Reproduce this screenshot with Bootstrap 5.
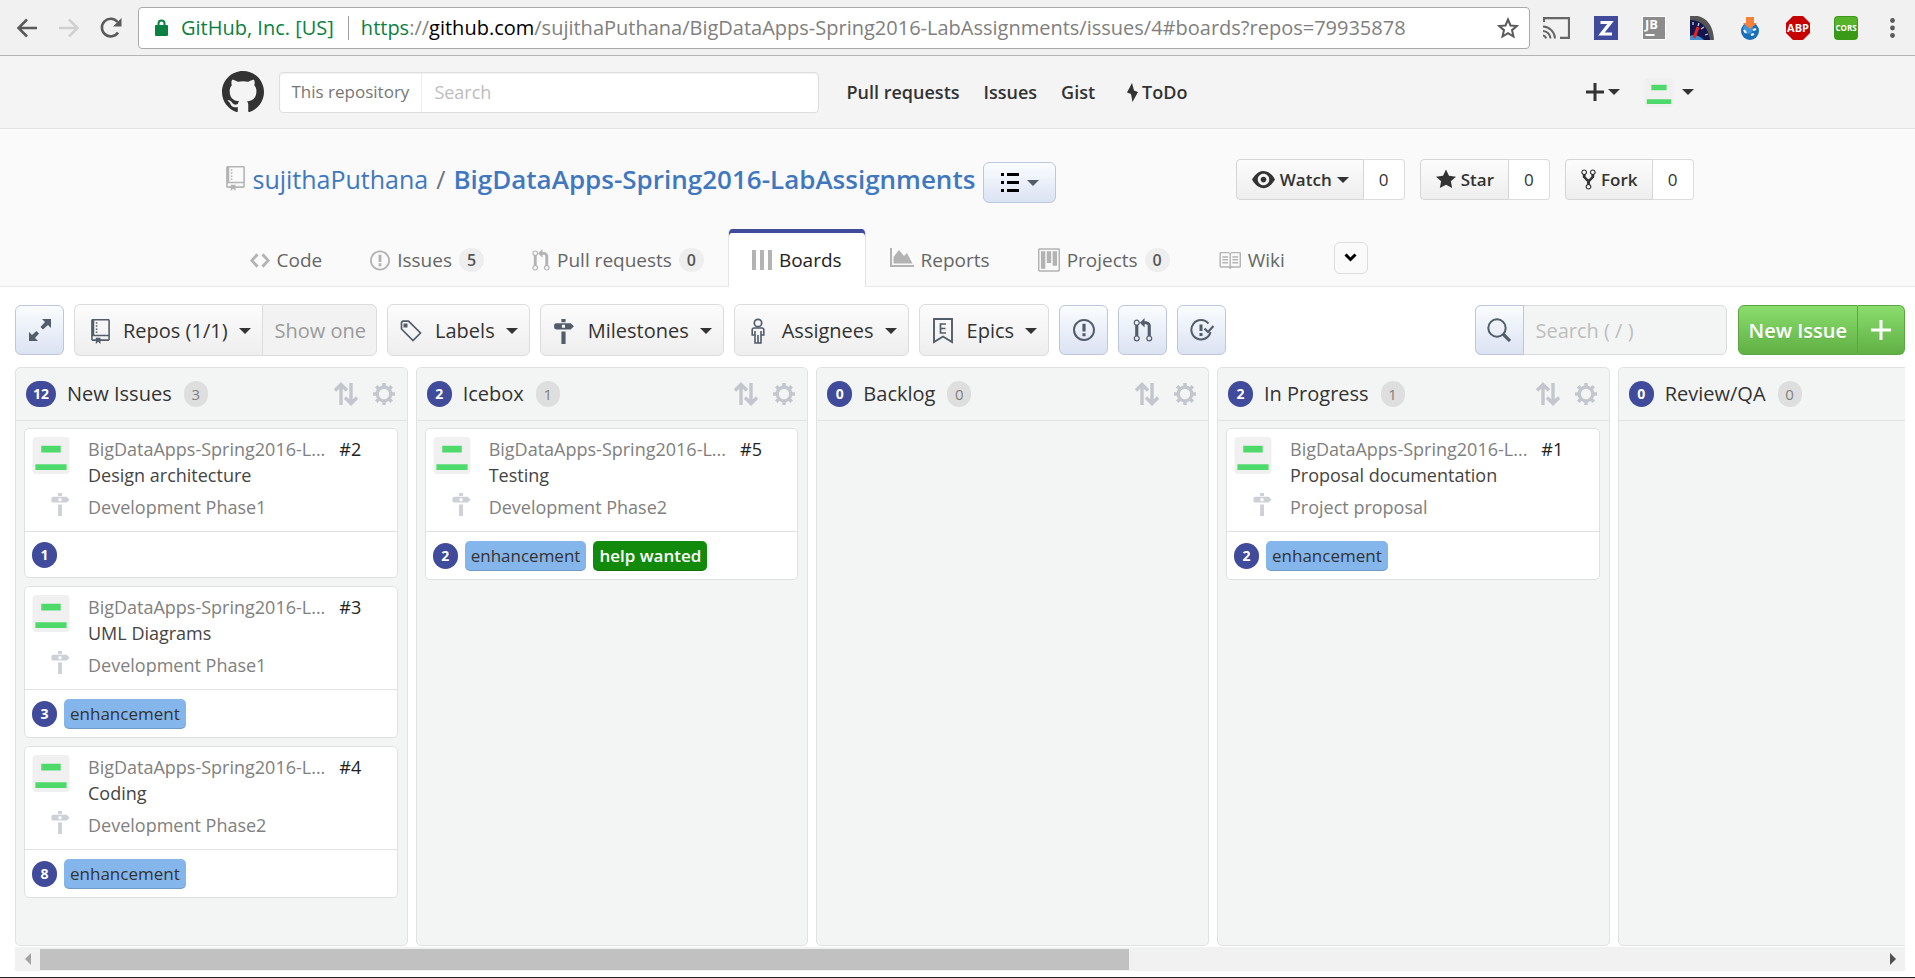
<!DOCTYPE html>
<html lang="en">
<head>
<meta charset="utf-8">
<meta name="viewport" content="width=device-width, initial-scale=1">
<title>Boards · sujithaPuthana/BigDataApps-Spring2016-LabAssignments</title>
<link href="https://cdn.jsdelivr.net/npm/bootstrap@5.3.0/dist/css/bootstrap.min.css" rel="stylesheet">
<style>
  :root { --ink:#333; --zen:#404b9b; --line:#e0e2e2; --slate:#525c6b; }
  body { font-family:"Open Sans","Noto Sans",sans-serif; font-size:18px; line-height:26px; color:var(--ink); background:#fff; overflow:hidden; }
  svg { display:block; flex:none; fill:currentColor; }
  a { text-decoration:none; color:inherit; }
  .caret { width:0; height:0; border:6px solid transparent; border-top-color:currentColor; border-bottom:0; flex:none; }

  /* browser bar */
  .chrome { background:#f1f1f1; border-bottom:1px solid #b4b4b4; height:56px; padding:6px 12px 6px 16px; color:#5a5a5a; }
  .chrome-btn { border:0; background:none; padding:0; color:inherit; }
  .omnibox { background:#fff; border:1px solid #a8a8a8; border-radius:4px; height:42px; margin-left:16px; margin-right:13px; padding:0 10px 0 16px; font-size:20px; }
  .omnibox .site { color:#0b8043; padding-left:5px; padding-right:14px; border-right:1px solid #a0a0a0; margin-right:12px; line-height:24px; }
  .omnibox .rest { color:#808080; }
  .omnibox .scheme { color:#0b8043; }
  .ext { gap:24px; }

  /* site header */
  .inner { width:77%; max-width:1472px; }
  .site-head { background:#f4f4f4; border-bottom:1px solid #e4e4e4; height:73px; }
  .site-search { border:1px solid #ddd; border-radius:4px; background:#fff; height:41px; width:540px; margin-left:15px; box-shadow:inset 0 1px 2px rgba(0,0,0,.06); }
  .site-search label { border-right:1px solid #eee; padding:0 12px 0 12px; font-size:17px; color:#767676; line-height:38px; }
  .site-search input, .tool-search input { border:0; background:none; outline:0; min-width:0; }
  input::placeholder { color:#bdbdbd; opacity:1; }
  .main-nav { margin-left:28px; gap:24px; font-size:18px; font-weight:600; }

  /* repository head */
  .repo-head { background:#fafafa; border-bottom:1px solid #e9e9e9; }
  .repo-title { font-size:25px; line-height:40px; color:#4078c0; padding-top:1px; padding-bottom:26px; }
  .repo-title .repo-name { font-size:26px; font-weight:600; }
  .btn-flat { border:1px solid #d5d5d5; background:linear-gradient(#fcfcfc,#eee); color:var(--ink); font-weight:500; border-radius:4px; }
  .btn-cool { border:1px solid #bcc6dc; background:linear-gradient(#fafdff,#dbe2f2); color:var(--slate); border-radius:6px; padding:0; }
  .list-btn { width:73px; height:41px; }
  .social { gap:15px; padding-top:6px; }
  .social .btn-flat, .social .tally { height:41px; font-size:17px; line-height:24px; }
  .social .btn-flat { border-radius:4px 0 0 4px; padding:0 14px 0 15px; gap:5px; font-weight:600; }
  .social .tally { border:1px solid #dcdcdc; border-left:0; border-radius:0 4px 4px 0; background:#fff; width:41px; font-weight:500; }
  .repo-tabs { height:57px; font-size:19px; color:#666; }
  .repo-tabs .tab { height:58px; padding:4px 23px 0; gap:7px; border:1px solid transparent; border-width:0 1px; }
  .repo-tabs .tab svg { color:#b3b3b3; }
  .repo-tabs .tab.current { background:#fff; color:#222; border-color:#e4e4e4; box-shadow:inset 0 4px 0 var(--zen); border-radius:4px 4px 0 0; }
  .pill { background:#eee; border-radius:12px; width:25px; height:24px; font-size:16px; line-height:24px; font-weight:600; text-align:center; color:#555; }
  .more-btn { width:34px; height:32px; border:1px solid #ddd; border-radius:6px; background:#fafafa; color:#000; margin-left:25px; }

  /* toolbar */
  .tools { padding:17px 10px 11px 15px; gap:10px; }
  .tools .btn-flat { height:52px; font-size:20px; border-radius:6px; padding:2px 11px 0 12px; border-color:#dcdcdc; gap:11px; }
  .tools .btn-flat svg { color:var(--slate); margin-right:2px; }
  .tools .show-one { background:#f2f2f2; color:#9b9b9b; padding-right:10px; }
  .tools .btn-cool { width:49px; height:50px; }
  .tool-search { width:252px; height:50px; border:1px solid #d8dcdc; border-radius:6px; background:#f3f5f5; font-size:20px; margin-right:1px; }
  .tool-search input { padding-top:3px; }
  .tool-search .btn-cool { height:50px; margin:-1px 0 -1px -1px; border-radius:6px 0 0 6px; }
  .btn-make { height:50px; border:1px solid #5aa544; background:linear-gradient(#8add6d,#60b044); color:#fff; font-size:20px; font-weight:600; padding:2px 10px 0; text-shadow:0 1px 0 rgba(0,0,0,.1); }
  .btn-make.add { padding:0 13px; }

  /* board */
  .board { margin:0 10px 0 15px; overflow:hidden; }
  .lane-wrap { flex:0 0 21.2%; padding-right:8px; }
  .lane { background:#f3f5f5; border:1px solid var(--line); border-radius:5px; }
  .lane-head { height:53px; border-bottom:1px solid var(--line); padding:0 12px 0 10px; color:#c3c7cd; }
  .lane-head h2 { font-size:20px; line-height:26px; font-weight:500; color:var(--ink); margin:0 12px 0 11px; }
  .points { background:var(--zen); color:#fff; border-radius:13px; min-width:25px; height:26px; padding:0 7px; font-size:14px; line-height:26px; font-weight:700; text-align:center; flex:none; }
  .count { background:#dedede; color:#808080; border-radius:13px; width:24px; height:26px; font-size:15px; line-height:26px; text-align:center; }
  .lane-tools { gap:15px; }
  .cards { padding:7px 9px 0 8px; gap:8px; }
  .issue { background:#fff; border:1px solid var(--line); border-radius:5px; }
  .issue-top { padding:7px 8px 11px 7px; border-bottom:1px solid var(--line); height:103px; }
  .issue-side { width:38px; margin-right:18px; padding-top:1px; }
  .issue-text { color:#808080; }
  .issue-text h3 { font-size:18px; line-height:26px; margin:0; color:#444; font-weight:400; }
  .issue-text .stone { padding-top:6px; }
  .issue-text .num { color:#222; margin-left:14px; font-weight:500; }
  .issue-foot { padding:9px 7px 8px; gap:7px; min-height:45px; }
  .tag-label { border-radius:5px; height:30px; line-height:30px; padding:0 6px; font-size:17px; box-shadow:inset 0 -1px 0 rgba(0,0,0,.15); }
  .tag-enh { background:#84b6eb; color:#333; font-weight:500; }
  .tag-help { background:#128a0c; color:#fff; font-weight:600; }

  /* horizontal scroller */
  .hbar { margin:1px 10px 6px 15px; height:24px; background:#f1f1f1; }
  .hbar button { width:25px; border:0; background:none; padding:0; }
  .hbar .track { padding:2px 0 1px; }
  .hbar .thumb { background:#c1c1c1; }
  .page-end { height:1px; background:#222; }
</style>
</head>
<body class="d-flex flex-column min-vh-100">

<svg width="0" height="0" class="position-absolute" aria-hidden="true">
  <symbol id="i-repo" viewBox="0 0 12 16"><path d="M4 9H3V8h1v1zm0-3H3v1h1V6zm0-2H3v1h1V4zm0-2H3v1h1V2zm8-1v12c0 .55-.45 1-1 1H6v2l-1.500-1.500L3 16v-2H1c-.55 0-1-.45-1-1V1c0-.55.45-1 1-1h10c.55 0 1 .45 1 1zm-1 10H1v2h2v-1h3v1h5v-2zm0-10H2v9h9V1z"/></symbol>
  <symbol id="i-issue" viewBox="0 0 14 16"><path d="M7 2.3c3.140 0 5.700 2.560 5.700 5.700s-2.560 5.700-5.700 5.700A5.710 5.710 0 0 1 1.300 8c0-3.140 2.560-5.700 5.700-5.700zM7 1C3.140 1 0 4.140 0 8s3.140 7 7 7 7-3.140 7-7-3.140-7-7-7zm1 3H6v5h2V4zm0 6H6v2h2v-2z"/></symbol>
  <symbol id="i-pr" viewBox="0 0 12 16"><path d="M11 11.28V5c-.03-.78-.34-1.470-.94-2.060C9.460 2.350 8.780 2.030 8 2H7V0L4 3l3 3V4h1c.27.02.48.11.69.31.21.2.3.42.31.69v6.280A1.993 1.993 0 0 0 10 15a1.993 1.993 0 0 0 1-3.720zm-1 2.920c-.66 0-1.200-.55-1.200-1.200 0-.65.55-1.200 1.200-1.200.65 0 1.200.55 1.200 1.200 0 .65-.55 1.200-1.200 1.200zM4 3c0-1.110-.89-2-2-2a1.993 1.993 0 0 0-1 3.720v6.560A1.993 1.993 0 0 0 2 15a1.993 1.993 0 0 0 1-3.720V4.720c.59-.34 1-.98 1-1.720zm-.8 10c0 .66-.55 1.200-1.200 1.200-.65 0-1.200-.55-1.200-1.200 0-.65.55-1.200 1.200-1.200.65 0 1.200.55 1.200 1.200zM2 4.200C1.340 4.200.8 3.650.8 3c0-.65.55-1.200 1.200-1.200.65 0 1.200.55 1.200 1.200 0 .65-.55 1.200-1.200 1.200z"/></symbol>
  <symbol id="i-mile" viewBox="0 0 19 24"><path fill-rule="evenodd" d="M7 0h4v3H7zM2 4h14l3 3-3 3H2q-2 0-2-2V6q0-2 2-2zm5.500 1.500v3h3v-3zM7 12h4v12H7z"/></symbol>
  <symbol id="i-sort" viewBox="0 0 24 24"><path d="M1 8.500 7 2.500 13 8.500M7 3v20M11 15.500l6 6 6-6M17 21V1" fill="none" stroke="currentColor" stroke-width="3.400"/></symbol>
  <symbol id="i-gear" viewBox="0 0 24 24"><circle cx="12" cy="12" r="7.400" fill="none" stroke="currentColor" stroke-width="3.600"/><path d="M12 0v4M12 20v4M0 12h4M20 12h4M3.500 3.500 7 7M17 17l3.500 3.500M3.500 20.500 7 17M17 7l3.500-3.500" stroke="currentColor" stroke-width="3.800"/></symbol>
  <symbol id="i-avatar" viewBox="0 0 38 38"><rect width="38" height="38" rx="4" fill="#f0f0f0"/><path fill="#4ed96b" d="M9 9h20v7H9zM3 28h32v6H3z"/></symbol>
</svg>

<header class="chrome d-flex align-items-center">
  <button class="chrome-btn" aria-label="Back"><svg width="22" height="20" viewBox="0 0 22 20"><path d="M11 1.500 2.500 10l8.500 8.500M2 10h19" fill="none" stroke="#5a5a5a" stroke-width="2.500"/></svg></button>
  <button class="chrome-btn ms-3 ps-1" aria-label="Forward"><svg width="22" height="20" viewBox="0 0 22 20"><path d="M11 1.500l8.500 8.500-8.500 8.500M20 10H1" fill="none" stroke="#d0d0d0" stroke-width="2.500"/></svg></button>
  <button class="chrome-btn ms-3 ps-1" aria-label="Reload"><svg width="22" height="22" viewBox="0 0 22 22"><path d="M18 15.500A8.800 8.800 0 1 1 17.500 5" fill="none" stroke="#5a5a5a" stroke-width="2.600"/><path d="M21.500 1v8.500H13z" fill="#5a5a5a"/></svg></button>
  <div class="omnibox d-flex align-items-center flex-grow-1">
    <svg width="13" height="17" viewBox="0 0 13 17" class="me-2"><path fill="#0b8043" fill-rule="evenodd" d="M1 6h1.500V4.500a4 4 0 0 1 8 0V6H12q1 0 1 1v9q0 1-1 1H1q-1 0-1-1V7q0-1 1-1zm3.500 0h4V4.500a2 2 0 0 0-4 0z"/></svg>
    <span class="site text-nowrap">GitHub, Inc. [US]</span>
    <span class="rest text-nowrap flex-grow-1"><span class="scheme">https</span>://<span class="text-black">github.com</span>/sujithaPuthana/BigDataApps-Spring2016-LabAssignments/issues/4#boards?repos=79935878</span>
    <button class="chrome-btn" aria-label="Bookmark"><svg width="22" height="21" viewBox="0 0 22 21"><path d="M11 2.500l2.500 6 6.300.5-4.800 4.200 1.500 6.300L11 16.200l-5.500 3.300L7 13.200 2.200 9l6.300-.5z" fill="none" stroke="#5a5a5a" stroke-width="2"/></svg></button>
  </div>
  <div class="ext d-flex align-items-center">
    <svg width="27" height="22" viewBox="0 0 27 22"><path d="M1 5V1.200h25v19.600h-9" fill="none" stroke="#666" stroke-width="2.200"/><path d="M0 18.500a3.500 3.500 0 0 1 3 3M0 14a8 8 0 0 1 7.500 7.500M0 9.500A12.500 12.500 0 0 1 12 21.500" fill="none" stroke="#666" stroke-width="2"/></svg>
    <svg width="24" height="24" viewBox="0 0 24 24"><path fill="#404b9b" d="M0 0h24v24H0z"/><path d="M6.500 6.500h10L7.500 18H18" fill="none" stroke="#fff" stroke-width="3.200"/></svg>
    <svg width="24" height="24" viewBox="0 0 24 24"><path fill="#fff" d="M0 0h24v24H0z"/><path fill="#8c8c8c" d="M1 1h22v22H1z"/><path d="M3.500 19h9" stroke="#fff" stroke-width="2"/><text x="3" y="13" font-size="13" font-weight="700" fill="#fff">JB</text></svg>
    <svg width="24" height="24" viewBox="0 0 24 24"><path fill="#555" d="M0 0h8q15 4 16 24H0z"/><path fill="#15154e" d="M0 4q17 0 20 20H0z"/><path fill="#3f8fd0" d="M0 20q6-3 14 4H0z"/><path d="M4 22 8 11" stroke="#e22" stroke-width="3"/><path d="M3 6v3M9 7l-1 3M14 11l-3 2M18 18l-3 1" stroke="#ccd" stroke-width="1.300"/></svg>
    <svg width="24" height="24" viewBox="0 0 24 24"><circle cx="12" cy="15" r="9" fill="#1c6db8"/><circle cx="10" cy="13" r="5" fill="#3d95dc"/><path fill="#f5823b" d="M8 1h8v6h3l-7 6-7-6h3z"/><path d="M6 14l2 3M15 14l3-1M13 19l3-1" stroke="#fff" stroke-width="2.200"/></svg>
    <svg width="24" height="24" viewBox="0 0 24 24"><path fill="#c70000" d="M7 0h10l7 7v10l-7 7H7l-7-7V7z"/><text x="12" y="16" font-size="11" font-weight="700" fill="#fff" text-anchor="middle">ABP</text></svg>
    <svg width="24" height="24" viewBox="0 0 24 24"><rect width="24" height="24" rx="4" fill="#3a9a18"/><path fill="#57b32c" d="M1 4q0-3 3-3h16q3 0 3 3v7H1z"/><text x="12" y="15" font-size="8" font-weight="700" fill="#fff" text-anchor="middle">CORS</text></svg>
    <button class="chrome-btn px-2" aria-label="Menu"><svg width="5" height="20" viewBox="0 0 5 20"><circle cx="2.500" cy="2.500" r="2.400"/><circle cx="2.500" cy="10" r="2.400"/><circle cx="2.500" cy="17.500" r="2.400"/></svg></button>
  </div>
</header>

<div class="site-head">
  <div class="inner mx-auto h-100 d-flex align-items-center">
    <a href="#" aria-label="GitHub"><svg width="42" height="42" viewBox="0 0 16 16"><path d="M8 0C3.580 0 0 3.580 0 8c0 3.540 2.290 6.530 5.470 7.590.4.07.55-.17.55-.38 0-.19-.01-.82-.01-1.490-2.010.37-2.530-.49-2.690-.94-.09-.23-.48-.94-.82-1.130-.28-.15-.68-.52-.01-.53.63-.01 1.080.58 1.230.82.72 1.210 1.870.87 2.330.66.07-.52.28-.87.51-1.070-1.780-.2-3.640-.89-3.640-3.950 0-.87.31-1.590.82-2.150-.08-.2-.36-1.020.08-2.120 0 0 .67-.21 2.200.82.64-.18 1.320-.27 2-.27.68 0 1.360.09 2 .27 1.530-1.040 2.200-.82 2.200-.82.44 1.100.16 1.920.08 2.120.51.56.82 1.270.82 2.150 0 3.070-1.870 3.750-3.650 3.950.29.25.54.73.54 1.480 0 1.070-.01 1.930-.01 2.200 0 .21.15.46.55.38A8.013 8.013 0 0 0 16 8c0-4.420-3.580-8-8-8z"/></svg></a>
    <form class="site-search d-flex">
      <label for="q" class="text-nowrap">This repository</label>
      <input id="q" type="text" class="flex-grow-1 px-2 ms-1" placeholder="Search">
    </form>
    <nav class="main-nav d-flex text-nowrap">
      <a href="#">Pull requests</a><a href="#">Issues</a><a href="#">Gist</a>
      <a href="#" class="d-flex align-items-center ps-1"><svg width="11" height="19" viewBox="0 0 11 19" class="me-1 ms-1"><path d="M5 0 0 9.500l4 1.500 1.500 8L11 9 7 7.500z"/></svg>ToDo</a>
    </nav>
    <div class="ms-auto d-flex align-items-center">
      <button class="chrome-btn d-flex align-items-center" aria-label="Create new"><svg width="18" height="18" viewBox="0 0 18 18" class="me-1"><path d="M7.500 0h3v7.500H18v3h-7.500V18h-3v-7.500H0v-3h7.500z"/></svg><span class="caret"></span></button>
      <button class="chrome-btn d-flex align-items-center ms-4" aria-label="Account"><svg width="30" height="29" class="me-2"><use href="#i-avatar"/></svg><span class="caret"></span></button>
    </div>
  </div>
</div>

<div class="repo-head">
  <div class="inner mx-auto">
    <div class="d-flex pt-4">
      <div class="repo-title d-flex align-items-center text-nowrap">
        <svg width="19" height="25" class="ms-1 me-2" color="#b3b3b3"><use href="#i-repo"/></svg>
        <a href="#">sujithaPuthana</a><span class="mx-2 text-secondary">/</span><a href="#" class="repo-name">BigDataApps-Spring2016-LabAssignments</a>
        <button class="btn-cool list-btn d-flex align-items-center justify-content-center ms-2 mt-2" aria-label="Repository list"><svg width="18" height="19" viewBox="0 0 18 19" class="me-2" color="#000"><path d="M0 0h3v3H0zM6 0h12v3H6zM0 8h3v3H0zM6 8h12v3H6zM0 16h3v3H0zM6 16h12v3H6z"/></svg><span class="caret"></span></button>
      </div>
      <div class="social ms-auto d-flex text-nowrap">
        <div class="d-flex"><button class="btn-flat d-flex align-items-center"><svg width="23" height="23" viewBox="0 0 16 16"><path d="M8.060 2C3 2 0 8 0 8s3 6 8.060 6C13 14 16 8 16 8s-3-6-7.940-6zM8 12c-2.200 0-4-1.780-4-4 0-2.200 1.800-4 4-4 2.220 0 4 1.800 4 4 0 2.220-1.780 4-4 4zm2-4c0 1.110-.89 2-2 2-1.110 0-2-.89-2-2 0-1.110.89-2 2-2 1.110 0 2 .89 2 2z"/></svg>Watch<span class="caret"></span></button><a href="#" class="tally d-flex align-items-center justify-content-center">0</a></div>
        <div class="d-flex"><button class="btn-flat d-flex align-items-center"><svg width="20" height="23" viewBox="0 0 14 16"><path d="M14 6l-4.900-.64L7 1 4.900 5.360 0 6l3.600 3.260L2.670 14 7 11.670 11.330 14l-.93-4.740z"/></svg>Star</button><a href="#" class="tally d-flex align-items-center justify-content-center">0</a></div>
        <div class="d-flex"><button class="btn-flat d-flex align-items-center"><svg width="15" height="23" viewBox="0 0 10 16"><path d="M8 1a1.993 1.993 0 0 0-1 3.720V6L5 8 3 6V4.720A1.993 1.993 0 0 0 2 1a1.993 1.993 0 0 0-1 3.720V6.500l3 3v1.780A1.993 1.993 0 0 0 5 15a1.993 1.993 0 0 0 1-3.720V9.500l3-3V4.720A1.993 1.993 0 0 0 8 1zM2 4.200C1.340 4.200.8 3.650.8 3c0-.65.55-1.200 1.200-1.200.65 0 1.200.55 1.200 1.200 0 .65-.55 1.200-1.200 1.200zm3 10c-.66 0-1.200-.55-1.200-1.200 0-.65.55-1.200 1.200-1.200.65 0 1.200.55 1.200 1.200 0 .65-.55 1.200-1.200 1.200zm3-10c-.66 0-1.200-.55-1.200-1.200 0-.65.55-1.200 1.200-1.200.65 0 1.200.55 1.200 1.200 0 .65-.55 1.200-1.200 1.200z"/></svg>Fork</button><a href="#" class="tally d-flex align-items-center justify-content-center">0</a></div>
      </div>
    </div>
    <nav class="repo-tabs d-flex align-items-start text-nowrap ms-1">
      <a href="#" class="tab d-flex align-items-center"><svg width="20" height="23" viewBox="0 0 14 16"><path d="M9.500 3L8 4.500 11.500 8 8 11.500 9.500 13 14 8 9.500 3zm-5 0L0 8l4.500 5L6 11.500 2.500 8 6 4.500 4.500 3z"/></svg>Code</a>
      <a href="#" class="tab d-flex align-items-center"><svg width="20" height="23"><use href="#i-issue"/></svg>Issues<span class="pill">5</span></a>
      <a href="#" class="tab d-flex align-items-center"><svg width="18" height="23"><use href="#i-pr"/></svg>Pull requests<span class="pill">0</span></a>
      <a href="#" class="tab current d-flex align-items-center" aria-current="page"><svg width="20" height="20" viewBox="0 0 20 20"><path d="M0 0h4v20H0zM8 0h4v20H8zM16 0h4v20h-4z"/></svg>Boards</a>
      <a href="#" class="tab d-flex align-items-center"><svg width="24" height="20" viewBox="0 0 24 20" class="mb-1"><path d="M0 0h2v17h22v2H0zM3.500 15.500V9L9 2l5 6 3-3 5.500 10.500z"/></svg>Reports</a>
      <a href="#" class="tab d-flex align-items-center"><svg width="22" height="24" viewBox="0 0 15 16"><path fill-rule="evenodd" d="M10 12h3V2h-3v10zm-4-2h3V2H6v8zm-4 4h3V2H2v12zm-1 1h13V1H1v14zM14 0H1a1 1 0 0 0-1 1v14a1 1 0 0 0 1 1h13a1 1 0 0 0 1-1V1a1 1 0 0 0-1-1z"/></svg>Projects<span class="pill">0</span></a>
      <a href="#" class="tab d-flex align-items-center"><svg width="23" height="23" viewBox="0 0 16 16"><path d="M3 5h4v1H3V5zm0 3h4V7H3v1zm0 2h4V9H3v1zm11-5h-4v1h4V5zm0 2h-4v1h4V7zm0 2h-4v1h4V9zm2-6v9c0 .55-.45 1-1 1H9.500l-1 1-1-1H2c-.55 0-1-.45-1-1V3c0-.55.45-1 1-1h5.500l1 1 1-1H15c.55 0 1 .45 1 1zm-8 .5L7.500 3H2v9h6V3.500zm7-.5H9.500l-.5.5V12h6V3z"/></svg>Wiki</a>
      <button class="more-btn d-flex align-items-center justify-content-center align-self-center p-0" aria-label="More tabs"><svg width="13" height="9" viewBox="0 0 13 9"><path d="M1.500 1.500l5 5 5-5" fill="none" stroke="#000" stroke-width="3"/></svg></button>
    </nav>
  </div>
</div>

<div class="tools d-flex align-items-center text-nowrap">
  <button class="btn-cool d-flex align-items-center justify-content-center" aria-label="Full screen"><svg width="22" height="22" viewBox="0 0 22 22"><path d="M13 0h9v9l-3-3-5 4.500-2.500-2.500L16 3zM0 22v-9l3 3 4.500-4L10 14.500 6 19l3 3z"/></svg></button>
  <div class="d-flex">
    <button class="btn-flat d-flex align-items-center rounded-end-0 border-end-0"><svg width="19" height="25" class="ms-1"><use href="#i-repo"/></svg>Repos (1/1)<span class="caret"></span></button>
    <button class="btn-flat show-one rounded-start-0 fw-normal">Show one</button>
  </div>
  <button class="btn-flat d-flex align-items-center"><svg width="22" height="22" viewBox="0 0 22 22"><path d="M1.500 3q0-1.800 1.800-1.800h5.200L20.500 13 13 20.500 1.500 9z" fill="none" stroke="currentColor" stroke-width="1.700"/><path d="M3.500 3.500h4v4h-4z"/></svg>Labels<span class="caret"></span></button>
  <button class="btn-flat d-flex align-items-center"><svg width="22" height="25"><use href="#i-mile"/></svg>Milestones<span class="caret"></span></button>
  <button class="btn-flat d-flex align-items-center"><svg width="22" height="26" viewBox="0 0 22 26"><circle cx="11" cy="5" r="3.700" fill="none" stroke="currentColor" stroke-width="1.700"/><path d="M7 10h8q1.800 0 1.800 2v5H14v8H8v-8H5.200v-5q0-2 1.800-2zM8 13v4M14 13v4M11 17v8" fill="none" stroke="currentColor" stroke-width="1.600"/></svg>Assignees<span class="caret"></span></button>
  <button class="btn-flat d-flex align-items-center"><svg width="22" height="26" viewBox="0 0 22 26"><path d="M2 1h18v23l-9-5.500L2 24z" fill="none" stroke="currentColor" stroke-width="1.900"/><path d="M14 6H8.500v9H14M8.500 10.500h5" fill="none" stroke="currentColor" stroke-width="1.700"/></svg>Epics<span class="caret"></span></button>
  <button class="btn-cool d-flex align-items-center justify-content-center" aria-label="Issues"><svg width="22" height="26"><use href="#i-issue"/></svg></button>
  <button class="btn-cool d-flex align-items-center justify-content-center" aria-label="Pull requests"><svg width="20" height="25"><use href="#i-pr"/></svg></button>
  <button class="btn-cool d-flex align-items-center justify-content-center" aria-label="Closed issues"><svg width="24" height="22" viewBox="0 0 24 22"><path d="M18.500 4.500A9.700 9.700 0 1 0 20.500 13" fill="none" stroke="currentColor" stroke-width="2"/><path d="M9.500 5.500h3V12h-3zM9.500 14h3v3h-3z"/><path d="M14.500 9.500l3.500 3.500 5.500-6" fill="none" stroke="currentColor" stroke-width="2.200"/></svg></button>
  <form class="tool-search d-flex ms-auto">
    <button type="button" class="btn-cool d-flex align-items-center justify-content-center flex-shrink-0" aria-label="Search"><svg width="24" height="24" viewBox="0 0 24 24"><circle cx="10" cy="10" r="8.700" fill="none" stroke="currentColor" stroke-width="2"/><path d="M16 16l7 7" stroke="currentColor" stroke-width="3.200"/></svg></button>
    <input type="text" class="flex-grow-1 px-2 ms-1" placeholder="Search ( / )" aria-label="Search issues">
  </form>
  <div class="d-flex">
    <button class="btn-make rounded-start-2">New Issue</button>
    <button class="btn-make add border-start-0 rounded-end-2" aria-label="New"><svg width="20" height="20" viewBox="0 0 20 20"><path d="M8.500 0h3v8.500H20v3h-8.500V20h-3v-8.500H0v-3h8.500z"/></svg></button>
  </div>
</div>

<main class="board d-flex flex-grow-1">
  <div class="lane-wrap d-flex flex-column">
    <section class="lane flex-grow-1">
      <div class="lane-head d-flex align-items-center"><span class="points">12</span><h2>New Issues</h2><span class="count">3</span><div class="lane-tools ms-auto d-flex align-items-center"><svg width="24" height="24"><use href="#i-sort"/></svg><svg width="22" height="22"><use href="#i-gear"/></svg></div></div>
      <div class="cards d-flex flex-column">
        <article class="issue">
          <div class="issue-top d-flex"><div class="issue-side d-flex flex-column align-items-end"><svg width="38" height="37"><use href="#i-avatar"/></svg><svg width="19" height="23" class="mt-auto mb-1" color="#cdd0d6"><use href="#i-mile"/></svg></div>
          <div class="issue-text text-nowrap"><div>BigDataApps-Spring2016-L...<a href="#" class="num">#2</a></div><h3>Design architecture</h3><div class="stone">Development Phase1</div></div></div>
          <div class="issue-foot d-flex align-items-center"><span class="points">1</span></div>
        </article>
        <article class="issue">
          <div class="issue-top d-flex"><div class="issue-side d-flex flex-column align-items-end"><svg width="38" height="37"><use href="#i-avatar"/></svg><svg width="19" height="23" class="mt-auto mb-1" color="#cdd0d6"><use href="#i-mile"/></svg></div>
          <div class="issue-text text-nowrap"><div>BigDataApps-Spring2016-L...<a href="#" class="num">#3</a></div><h3>UML Diagrams</h3><div class="stone">Development Phase1</div></div></div>
          <div class="issue-foot d-flex align-items-center"><span class="points">3</span><span class="tag-label tag-enh">enhancement</span></div>
        </article>
        <article class="issue">
          <div class="issue-top d-flex"><div class="issue-side d-flex flex-column align-items-end"><svg width="38" height="37"><use href="#i-avatar"/></svg><svg width="19" height="23" class="mt-auto mb-1" color="#cdd0d6"><use href="#i-mile"/></svg></div>
          <div class="issue-text text-nowrap"><div>BigDataApps-Spring2016-L...<a href="#" class="num">#4</a></div><h3>Coding</h3><div class="stone">Development Phase2</div></div></div>
          <div class="issue-foot d-flex align-items-center"><span class="points">8</span><span class="tag-label tag-enh">enhancement</span></div>
        </article>
      </div>
    </section>
  </div>
  <div class="lane-wrap d-flex flex-column">
    <section class="lane flex-grow-1">
      <div class="lane-head d-flex align-items-center"><span class="points">2</span><h2>Icebox</h2><span class="count">1</span><div class="lane-tools ms-auto d-flex align-items-center"><svg width="24" height="24"><use href="#i-sort"/></svg><svg width="22" height="22"><use href="#i-gear"/></svg></div></div>
      <div class="cards d-flex flex-column">
        <article class="issue">
          <div class="issue-top d-flex"><div class="issue-side d-flex flex-column align-items-end"><svg width="38" height="37"><use href="#i-avatar"/></svg><svg width="19" height="23" class="mt-auto mb-1" color="#cdd0d6"><use href="#i-mile"/></svg></div>
          <div class="issue-text text-nowrap"><div>BigDataApps-Spring2016-L...<a href="#" class="num">#5</a></div><h3>Testing</h3><div class="stone">Development Phase2</div></div></div>
          <div class="issue-foot d-flex align-items-center"><span class="points">2</span><span class="tag-label tag-enh">enhancement</span><span class="tag-label tag-help">help wanted</span></div>
        </article>
      </div>
    </section>
  </div>
  <div class="lane-wrap d-flex flex-column">
    <section class="lane flex-grow-1">
      <div class="lane-head d-flex align-items-center"><span class="points">0</span><h2>Backlog</h2><span class="count">0</span><div class="lane-tools ms-auto d-flex align-items-center"><svg width="24" height="24"><use href="#i-sort"/></svg><svg width="22" height="22"><use href="#i-gear"/></svg></div></div>
    </section>
  </div>
  <div class="lane-wrap d-flex flex-column">
    <section class="lane flex-grow-1">
      <div class="lane-head d-flex align-items-center"><span class="points">2</span><h2>In Progress</h2><span class="count">1</span><div class="lane-tools ms-auto d-flex align-items-center"><svg width="24" height="24"><use href="#i-sort"/></svg><svg width="22" height="22"><use href="#i-gear"/></svg></div></div>
      <div class="cards d-flex flex-column">
        <article class="issue">
          <div class="issue-top d-flex"><div class="issue-side d-flex flex-column align-items-end"><svg width="38" height="37"><use href="#i-avatar"/></svg><svg width="19" height="23" class="mt-auto mb-1" color="#cdd0d6"><use href="#i-mile"/></svg></div>
          <div class="issue-text text-nowrap"><div>BigDataApps-Spring2016-L...<a href="#" class="num">#1</a></div><h3>Proposal documentation</h3><div class="stone">Project proposal</div></div></div>
          <div class="issue-foot d-flex align-items-center"><span class="points">2</span><span class="tag-label tag-enh">enhancement</span></div>
        </article>
      </div>
    </section>
  </div>
  <div class="lane-wrap d-flex flex-column">
    <section class="lane flex-grow-1">
      <div class="lane-head d-flex align-items-center"><span class="points">0</span><h2>Review/QA</h2><span class="count">0</span></div>
    </section>
  </div>
</main>

<div class="hbar d-flex align-items-stretch">
  <button class="d-flex align-items-center justify-content-center" aria-label="Scroll left"><svg width="6" height="12" viewBox="0 0 6 12" color="#a3a3a3"><path d="M6 0v12L0 6z"/></svg></button>
  <div class="track flex-grow-1 d-flex"><div class="thumb" style="width:59.2%"></div></div>
  <button class="d-flex align-items-center justify-content-center" aria-label="Scroll right"><svg width="6" height="12" viewBox="0 0 6 12" color="#505050"><path d="M0 0v12l6-6z"/></svg></button>
</div>
<div class="page-end"></div>

<script src="https://cdn.jsdelivr.net/npm/bootstrap@5.3.0/dist/js/bootstrap.bundle.min.js"></script>
</body>
</html>
